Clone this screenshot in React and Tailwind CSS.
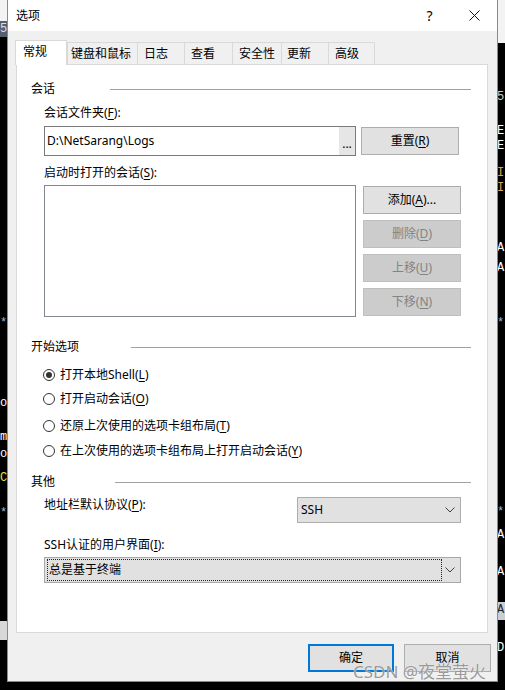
import React from "react";

const U = ({ children }) => (
    <span className="underline underline-offset-2 decoration-1">{children}</span>
);

function Heading({ text, lineClass }) {
    return (
        <div className="flex items-center h-[16px] leading-[16px] pr-[16px]">
            <span>{text}</span>
            <div className={`flex-1 h-px bg-[#a0a0a0] ${lineClass}`} />
        </div>
    );
}

function Chevron() {
    return (
        <svg width="10" height="6" viewBox="0 0 10 6" className="shrink-0">
            <polyline points="0.5,0.5 5,5 9.5,0.5" fill="none" stroke="#404040" strokeWidth="1" />
        </svg>
    );
}

function Radio({ checked, children, className }) {
    return (
        <div className={`flex items-center h-[24px] ml-[12px] gap-[5px] ${className}`}>
            <span className="w-[12px] h-[12px] rounded-full border border-[#333] bg-white flex items-center justify-center">
                {checked && <span className="w-[6px] h-[6px] rounded-full bg-[#333]" />}
            </span>
            <span className="leading-[16px]">{children}</span>
        </div>
    );
}

const tabs = [
    { t: "键盘和鼠标", c: "w-[71px] pl-[3px]" },
    { t: "日志", c: "w-[48px] pl-[6px] -ml-px" },
    { t: "查看", c: "w-[49px] pl-[6px] -ml-px" },
    { t: "安全性", c: "w-[50px] pl-[6px] -ml-px" },
    { t: "更新", c: "w-[48px] pl-[5px] -ml-px" },
    { t: "高级", c: "w-[47px] pl-[6px] -ml-px" },
];

export default function App() {
    return (
        <div className="relative w-[505px] h-[690px] overflow-hidden bg-black text-[12px] text-black font-['Noto_Sans','Noto_Sans_CJK_SC',sans-serif]">
            {/* terminal behind the dialog */}
            <div className="absolute left-0 top-0 w-[7px] h-[21px] bg-[#f3f3f3]" />
            <div className="absolute left-0 top-[21px] w-[7px] h-[16px] bg-[#55606e] text-[12px] leading-[16px] text-[#dde] font-['Liberation_Mono',monospace]">5</div>
            <div className="absolute right-0 top-0 w-[8px] h-[43px] bg-[#f3f3f3]" />
            <div className="absolute left-0 top-[621px] w-[7px] h-[19px] bg-[#d8d8d8]" />
            <div className="absolute right-0 top-[602px] w-[8px] h-[18px] bg-[#c9cdd6]" />
            <div className="absolute inset-0 font-['Liberation_Mono',monospace] text-[12px] leading-[14px]">
                <span className="absolute left-0 top-[316px] text-[#9bd]">*</span>
                <span className="absolute left-0 top-[396px] text-white">o</span>
                <span className="absolute left-0 top-[430px] text-white">m</span>
                <span className="absolute left-0 top-[447px] text-white">o</span>
                <span className="absolute left-0 top-[471px] text-[#e8e03a]">C</span>
                <span className="absolute left-0 top-[506px] text-[#9bd]">*</span>
                <span className="absolute left-[497px] top-[90px] text-[#ccc]">5</span>
                <span className="absolute left-[497px] top-[124px] text-white">E</span>
                <span className="absolute left-[497px] top-[139px] text-white">E</span>
                <span className="absolute left-[497px] top-[166px] text-[#e0a050]">I</span>
                <span className="absolute left-[497px] top-[181px] text-[#e0a050]">I</span>
                <span className="absolute left-[497px] top-[241px] text-white">A</span>
                <span className="absolute left-[497px] top-[261px] text-white">A</span>
                <span className="absolute left-[497px] top-[316px] text-[#9bd]">*</span>
                <span className="absolute left-[497px] top-[505px] text-[#9bd]">*</span>
                <span className="absolute left-[497px] top-[528px] text-white">A</span>
                <span className="absolute left-[497px] top-[565px] text-white">A</span>
                <span className="absolute left-[497px] top-[603px] text-[#222]">A</span>
                <span className="absolute left-[497px] top-[641px] text-white">D</span>
            </div>

            {/* dialog window */}
            <div className="relative ml-[7px] w-[491px] h-[682px] flex flex-col bg-[#f0f0f0] border-x border-b border-[#8a8a8a]">
                <div className="h-[31px] bg-white flex items-center">
                    <span className="pl-[8px] leading-[16px]">选项</span>
                    <div className="ml-auto flex h-full">
                        <div className="w-[45px] flex items-center justify-center text-[14px]">?</div>
                        <div className="w-[45px] flex items-center justify-center">
                            <svg width="11" height="11" viewBox="0 0 11 11">
                                <path d="M0.5 0.5 L10.5 10.5 M10.5 0.5 L0.5 10.5" stroke="#111" strokeWidth="1" />
                            </svg>
                        </div>
                    </div>
                </div>

                <div className="flex-1 flex flex-col pt-[9px] pl-[7px]">
                    {/* tabs */}
                    <div className="flex items-end h-[24px]">
                        <div className="relative z-10 w-[52px] h-[25px] -mb-px pl-[7px] pt-[3px] leading-[16px] bg-white border border-b-0 border-[#d9d9d9]">
                            常规
                        </div>
                        {tabs.map((tab) => (
                            <div
                                key={tab.t}
                                className={`h-[22px] pt-[3px] leading-[16px] border border-b-0 border-[#d9d9d9] bg-[#f0f0f0] ${tab.c}`}
                            >
                                {tab.t}
                            </div>
                        ))}
                    </div>

                    {/* panel */}
                    <div className="ml-[1px] w-[472px] h-[569px] bg-white border border-[#d9d9d9] pl-[14px] pt-[16px] flex flex-col">
                        <Heading text="会话" lineClass="ml-[55px]" />
                        <div className="ml-[13px] mt-[8px] h-[16px] leading-[16px]">
                            会话文件夹(<U>F</U>):
                        </div>
                        <div className="ml-[13px] mt-[5px] flex items-start">
                            <div className="w-[312px] h-[30px] border border-[#7a7a7a] bg-white flex items-stretch">
                                <span className="flex-1 pl-[2px] leading-[28px]">D:\NetSarang\Logs</span>
                                <span className="w-[17px] bg-[#e6e6e6] border-l border-white flex items-end justify-center pb-[6px] leading-[10px]">...</span>
                            </div>
                            <button className="ml-[5px] mt-[1px] w-[98px] h-[28px] bg-[#e1e1e1] border border-[#adadad] leading-[16px]">
                                重置(<U>R</U>)
                            </button>
                        </div>
                        <div className="ml-[13px] mt-[9px] h-[16px] leading-[16px]">
                            启动时打开的会话(<U>S</U>):
                        </div>
                        <div className="ml-[13px] mt-[4px] flex items-start">
                            <div className="w-[312px] h-[132px] border border-[#828790] bg-white" />
                            <div className="ml-[7px] mt-[1px] flex flex-col gap-[6px]">
                                <button className="w-[98px] h-[28px] bg-[#e1e1e1] border border-[#adadad] leading-[16px]">
                                    添加(<U>A</U>)...
                                </button>
                                <button className="w-[98px] h-[28px] bg-[#cccccc] border border-[#bfbfbf] text-[#838383] leading-[16px]">
                                    删除(<U>D</U>)
                                </button>
                                <button className="w-[98px] h-[28px] bg-[#cccccc] border border-[#bfbfbf] text-[#838383] leading-[16px]">
                                    上移(<U>U</U>)
                                </button>
                                <button className="w-[98px] h-[28px] bg-[#cccccc] border border-[#bfbfbf] text-[#838383] leading-[16px]">
                                    下移(<U>N</U>)
                                </button>
                            </div>
                        </div>

                        <div className="mt-[22px]">
                            <Heading text="开始选项" lineClass="ml-[52px]" />
                        </div>
                        <div className="mt-[8px] flex flex-col">
                            <Radio checked>打开本地Shell(<U>L</U>)</Radio>
                            <Radio>打开启动会话(<U>O</U>)</Radio>
                            <Radio className="mt-[3px]">还原上次使用的选项卡组布局(<U>T</U>)</Radio>
                            <Radio className="mt-[1px]">在上次使用的选项卡组布局上打开启动会话(<U>Y</U>)</Radio>
                        </div>

                        <div className="mt-[11px]">
                            <Heading text="其他" lineClass="ml-[60px]" />
                        </div>
                        <div className="ml-[13px] mt-[7px] flex items-start">
                            <div className="w-[253px] h-[16px] leading-[16px]">
                                地址栏默认协议(<U>P</U>):
                            </div>
                            <div className="w-[164px] h-[26px] bg-[#e1e1e1] border border-[#adadad] flex items-center pl-[3px] pr-[5px]">
                                <span className="flex-1 leading-[16px]">SSH</span>
                                <Chevron />
                            </div>
                        </div>
                        <div className="ml-[13px] mt-[14px] h-[16px] leading-[16px]">
                            SSH认证的用户界面(<U>I</U>):
                        </div>
                        <div className="ml-[13px] mt-[4px] w-[417px] h-[26px] bg-[#e1e1e1] border border-[#a8a8a8] flex items-center pl-[2px] pr-[5px]">
                            <div className="w-[395px] h-[22px] border border-dotted border-[#222] flex items-center pl-px leading-[16px]">
                                总是基于终端
                            </div>
                            <span className="ml-auto">
                                <Chevron />
                            </span>
                        </div>
                    </div>

                    {/* footer buttons */}
                    <div className="mt-[11px] flex justify-end gap-[10px] pr-[6px]">
                        <button className="w-[86px] h-[28px] bg-[#e1e1e1] border-2 border-[#0078d7] leading-[16px]">
                            确定
                        </button>
                        <button className="w-[87px] h-[28px] bg-[#e1e1e1] border border-[#adadad] leading-[16px]">
                            取消
                        </button>
                    </div>
                </div>
            </div>

            {/* watermark */}
            <div className="absolute left-[353px] top-[661px] text-[17px] leading-[22px] text-[#8c8c8c]/90 font-['Noto_Sans','Noto_Sans_CJK_SC',sans-serif] [text-shadow:0_0_1px_#ffffff]">
                CSDN @夜堂萤火
            </div>
        </div>
    );
}
